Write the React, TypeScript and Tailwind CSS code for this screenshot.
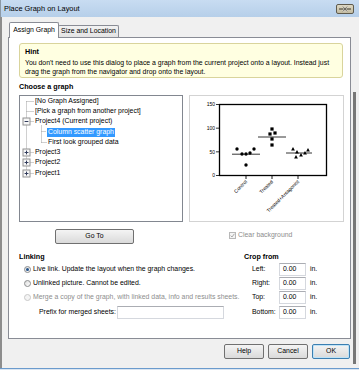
import React from "react";

type RowProps = { label: string; indent: number; selected?: boolean };

const treeRows: RowProps[] = [
  { label: "[No Graph Assigned]", indent: 15 },
  { label: "[Pick a graph from another project]", indent: 15 },
  { label: "Project4 (Current project)", indent: 15 },
  { label: "Column scatter graph", indent: 27, selected: true },
  { label: "First look grouped data", indent: 28 },
  { label: "Project3", indent: 15 },
  { label: "Project2", indent: 15 },
  { label: "Project1", indent: 15 },
];

const rowY = (i: number) => Math.floor(5 + 10.3 * i) + 0.5;

function TreeLines() {
  const expanders: Record<number, "minus" | "plus"> = { 2: "minus", 5: "plus", 6: "plus", 7: "plus" };
  return (
    <svg className="pointer-events-none absolute inset-0" width="162" height="125">
      <g stroke="#a0a0a0" strokeWidth="1" strokeDasharray="1 1" fill="none">
        <line x1="6.5" y1={rowY(0)} x2="6.5" y2={rowY(7)} />
        {treeRows.map((_, i) =>
          i === 3 || i === 4 ? null : (
            <line key={i} x1={expanders[i] ? 10.5 : 6.5} y1={rowY(i)} x2="14" y2={rowY(i)} />
          )
        )}
        <line x1="21.5" y1={rowY(2) + 4} x2="21.5" y2={rowY(4)} />
        <line x1="21.5" y1={rowY(3)} x2="26" y2={rowY(3)} />
        <line x1="21.5" y1={rowY(4)} x2="27" y2={rowY(4)} />
      </g>
      {Object.entries(expanders).map(([k, kind]) => {
        const y = rowY(Number(k));
        return (
          <g key={k}>
            <rect x="3" y={y - 3.5} width="7" height="7" fill="#f7f7f7" stroke="#929292" strokeWidth="1" />
            <line x1="4.6" y1={y} x2="8.4" y2={y} stroke="#333d5c" strokeWidth="1" />
            {kind === "plus" && <line x1="6.5" y1={y - 1.9} x2="6.5" y2={y + 1.9} stroke="#333d5c" strokeWidth="1" />}
          </g>
        );
      })}
    </svg>
  );
}

const Y = (v: number) => 79.5 - (v * 71) / 150;

function ScatterPreview() {
  const circles = [
    [47, 53],
    [52, 58],
    [56, 58],
    [60, 57],
    [64, 53],
    [56, 69],
  ];
  const squares = [
    [82, 33],
    [80, 38],
    [85, 37],
    [82, 43],
    [82, 49],
  ];
  const triangles = [
    [103, 53],
    [107, 56],
    [106, 61],
    [111, 59],
    [115, 57],
    [118, 54],
  ];
  return (
    <svg width="153" height="125" fontFamily="Liberation Sans, Arial, sans-serif">
      <rect x="29.5" y="8.5" width="107" height="71" fill="none" stroke="#000" strokeWidth="1.3" />
      {[0, 50, 100, 150].map((v) => (
        <g key={v}>
          <line x1="26" y1={Y(v)} x2="29.5" y2={Y(v)} stroke="#000" strokeWidth="0.8" />
          <text x="25" y={Y(v) + 1.7} fontSize="5" textAnchor="end">
            {v}
          </text>
        </g>
      ))}
      {[
        [56, "Control"],
        [82, "Treated"],
        [108, "Treated+Antagonist"],
      ].map(([x, label]) => (
        <g key={label as string}>
          <line x1={x as number} y1="79.5" x2={x as number} y2="83" stroke="#000" strokeWidth="0.9" />
          <text
            fontSize="5"
            textAnchor="end"
            transform={`translate(${(x as number) + 1.5} 86) rotate(-45)`}
          >
            {label}
          </text>
        </g>
      ))}
      <g stroke="#000" strokeWidth="0.8">
        <line x1="42" y1={Y(45)} x2="70" y2={Y(45)} />
        <line x1="68" y1="41" x2="96" y2="41" />
        <line x1="96" y1="57" x2="122" y2="57" />
      </g>
      {circles.map(([x, y], i) => (
        <circle key={i} cx={x} cy={y} r="1.7" />
      ))}
      {squares.map(([x, y], i) => (
        <rect key={i} x={x - 1.6} y={y - 1.6} width="3.2" height="3.2" />
      ))}
      {triangles.map(([x, y], i) => (
        <polygon key={i} points={`${x},${y - 1.9} ${x + 1.9},${y + 1.4} ${x - 1.9},${y + 1.4}`} />
      ))}
    </svg>
  );
}

function Radio({ checked, disabled }: { checked?: boolean; disabled?: boolean }) {
  return (
    <span
      className={`flex h-[7px] w-[7px] shrink-0 items-center justify-center rounded-full border ${
        disabled
          ? "border-[#c9c9c9] bg-[#f4f4f4]"
          : "border-[#8b8d8e] bg-gradient-to-br from-[#dcdcdc] to-[#ffffff]"
      }`}
    >
      {checked && <span className="h-[3px] w-[3px] rounded-full bg-[#23538a]" />}
    </span>
  );
}

function TextBox({ value, className }: { value?: string; className: string }) {
  return (
    <div
      className={`flex h-[13px] items-center border border-[#d5d8de] border-t-[#abadb3] bg-white pl-[3px] ${className}`}
    >
      {value}
    </div>
  );
}

function Button({ label, primary, className }: { label: string; primary?: boolean; className: string }) {
  return (
    <div
      className={`flex h-[15px] items-center justify-center rounded-[2px] border bg-gradient-to-b from-[#f4f4f4] to-[#dadada] ${
        primary ? "border-[#3c7fb1] shadow-[inset_0_0_0_1px_#bfe3f7]" : "border-[#707070]"
      } ${className}`}
    >
      {label}
    </div>
  );
}

export default function App() {
  const crop = ["Left:", "Right:", "Top:", "Bottom:"];
  return (
    <div className="relative flex h-[370px] w-[359px] flex-col overflow-hidden bg-[#f0f0f0] font-['Liberation_Sans',Arial,sans-serif] text-[6.9px] leading-none text-black shadow-[inset_2px_0_0_#8d8d8d]">
      {/* title bar */}
      <div className="flex h-[17px] shrink-0 items-center justify-between bg-gradient-to-b from-[#c8dcf2] to-[#b6cfe9] pl-[4px] pr-[5px] shadow-[inset_1px_0_0_#8d99a6]">
        <span className="text-[7.4px]">Place Graph on Layout</span>
        <div className="flex h-[10px] w-[18px] items-center justify-center rounded-[2px] border border-[#5f5b4d] bg-gradient-to-b from-[#ddd8c4] to-[#c3bca2]">
          <svg width="14" height="8">
            <line x1="1" y1="4" x2="13" y2="4" stroke="#3b392f" strokeWidth="1" />
            <path d="M5 1.5 L9 6.5 M9 1.5 L5 6.5" stroke="#f5f3ea" strokeWidth="1.6" />
            <path d="M5 1.5 L9 6.5 M9 1.5 L5 6.5" stroke="#3b392f" strokeWidth="0.8" />
          </svg>
        </div>
      </div>

      {/* tabs */}
      <div className="mt-[5px] flex items-end pl-[9px]">
        <div className="relative z-10 -mb-px flex h-[16px] w-[50px] items-center justify-center rounded-t-[2px] border border-b-0 border-[#898c95] bg-white">
          Assign Graph
        </div>
        <div className="-ml-px flex h-[12px] w-[61px] items-center justify-center rounded-t-[2px] border border-b-0 border-[#898c95] bg-gradient-to-b from-[#f2f2f2] to-[#e3e3e3]">
          Size and Location
        </div>
      </div>

      {/* tab panel */}
      <div className="ml-[8px] h-[302px] w-[343px] shrink-0 border border-[#898c95] bg-white">
        <div className="ml-[10px] mt-[5px] h-[35px] w-[324px] rounded-[3px] border border-[#d9d49c] bg-[#ffffe1] pl-[5px] pt-[3px]">
          <div className="text-[7.2px] font-bold leading-[9px]">Hint</div>
          <div className="mt-[2px] leading-[9px]">
            You don't need to use this dialog to place a graph from the current project onto a layout. Instead just
            <br />
            drag the graph from the navigator and drop onto the layout.
          </div>
        </div>

        <div className="ml-[10px] mt-[4px] text-[7.2px] font-bold leading-[10px]">Choose a graph</div>

        <div className="ml-[10px] mt-[3px] flex gap-[6px]">
          <div className="flex w-[164px] flex-col">
            <div className="relative h-[127px] border border-[#828790] bg-white">
              <TreeLines />
              {treeRows.map((r) => (
                <div key={r.label} className="flex h-[10.3px] items-center" style={{ paddingLeft: r.indent }}>
                  {r.selected ? (
                    <span className="flex h-[9px] items-center bg-[#3399ff] px-[1px] text-white">{r.label}</span>
                  ) : (
                    <span>{r.label}</span>
                  )}
                </div>
              ))}
            </div>
            <Button label="Go To" className="ml-[36px] mt-[7px] w-[79px]" />
          </div>
          <div className="flex w-[155px] flex-col">
            <div className="h-[127px] border border-[#d3d3d3] bg-white">
              <ScatterPreview />
            </div>
            <div className="ml-[40px] mt-[10px] flex items-center gap-[2px] text-[#8d8d8d]">
              <span className="flex h-[7px] w-[7px] items-center justify-center border border-[#b8b8b8] bg-[#f4f4f4]">
                <svg width="5" height="5">
                  <path d="M0.6 2.6 L2 4 L4.4 0.8" stroke="#a3a3a3" strokeWidth="0.9" fill="none" />
                </svg>
              </span>
              Clear background
            </div>
          </div>
        </div>

        <div className="ml-[10px] mt-[8px] flex">
          <div className="flex w-[225px] flex-col">
            <div className="text-[7.2px] font-bold leading-[10px]">Linking</div>
            <div className="flex h-[14.3px] items-center gap-[2px] pl-[5px]">
              <Radio checked />
              Live link. Update the layout when the graph changes.
            </div>
            <div className="flex h-[14.3px] items-center gap-[2px] pl-[5px]">
              <Radio />
              Unlinked picture. Cannot be edited.
            </div>
            <div className="flex h-[14.3px] items-center gap-[2px] pl-[5px] text-[#8d8d8d]">
              <Radio disabled />
              Merge a copy of the graph, with linked data, info and results sheets.
            </div>
            <div className="flex h-[14.3px] items-center pl-[20px]">
              <span className="w-[78px]">Prefix for merged sheets:</span>
              <TextBox className="w-[107px]" />
            </div>
          </div>
          <div className="flex flex-col">
            <div className="text-[7.2px] font-bold leading-[10px]">Crop from</div>
            {crop.map((c) => (
              <div key={c} className="flex h-[14.3px] items-center pl-[8px]">
                <span className="w-[27px]">{c}</span>
                <TextBox value="0.00" className="w-[27px]" />
                <span className="ml-[4px]">in.</span>
              </div>
            ))}
          </div>
        </div>
      </div>

      {/* dialog buttons */}
      <div className="mt-[5px] flex justify-end gap-[4px] pr-[9px]">
        <Button label="Help" className="w-[40px]" />
        <Button label="Cancel" className="w-[40px]" />
        <Button label="OK" primary className="w-[38px]" />
      </div>

      <div className="mt-auto h-[1px] bg-[#6b9bcd]" />
      <div className="h-[1px] bg-[#dbe6f2]" />

      {/* edge of the window behind */}
      <div className="absolute right-[3px] top-[92px] h-[272px] w-[3px] bg-[#777]" />
    </div>
  );
}
